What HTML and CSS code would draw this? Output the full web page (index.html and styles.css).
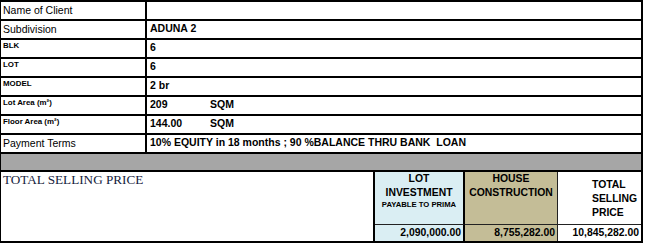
FILE: index.html
```html
<!DOCTYPE html>
<html>
<head>
<meta charset="utf-8">
<link rel="stylesheet" href="styles.css">
</head>
<body>
<div class="sheet">
  <div class="row"><div class="lbl">Name of Client</div><div class="val"></div></div>
  <div class="row"><div class="lbl">Subdivision</div><div class="val">ADUNA 2</div></div>
  <div class="row"><div class="lbl small">BLK</div><div class="val">6</div></div>
  <div class="row"><div class="lbl small">LOT</div><div class="val">6</div></div>
  <div class="row"><div class="lbl small">MODEL</div><div class="val">2 br</div></div>
  <div class="row"><div class="lbl small">Lot Area (m²)</div><div class="val"><span class="num">209</span><span>SQM</span></div></div>
  <div class="row"><div class="lbl small">Floor Area (m²)</div><div class="val"><span class="num">144.00</span><span>SQM</span></div></div>
  <div class="row"><div class="lbl">Payment Terms</div><div class="val pre">10% EQUITY in 18 months ; 90 %BALANCE THRU BANK  LOAN</div></div>
  <div class="band"></div>
  <div class="bottom">
    <div class="tsp">TOTAL SELLING PRICE</div>
    <div class="hd lot"><div>LOT</div><div>INVESTMENT</div><div class="sub">PAYABLE TO PRIMA</div></div>
    <div class="hd house"><div>HOUSE</div><div>CONSTRUCTION</div></div>
    <div class="hd total"><div>TOTAL</div><div>SELLING</div><div>PRICE</div></div>
    <div class="amt lot">2,090,000.00</div>
    <div class="amt house">8,755,282.00</div>
    <div class="amt total">10,845,282.00</div>
  </div>
</div>
</body>
</html>
```

FILE: styles.css
```css
html, body {
  margin: 0;
  padding: 0;
  background: #ffffff;
}

.sheet {
  width: 643px;
  box-sizing: border-box;
  border-top: 2px solid #000;
  border-left: 1px solid #000;
  border-right: 2px solid #000;
  font-family: "Liberation Sans", Arial, sans-serif;
  color: #000;
}

.row {
  display: grid;
  grid-template-columns: 146px 1fr;
  height: 19px;
  box-sizing: border-box;
  border-bottom: 2px solid #000;
}

.lbl {
  border-right: 2px solid #000;
  padding-left: 2px;
  font-size: 10.5px;
  line-height: 16px;
  white-space: nowrap;
}

.lbl.small {
  font-size: 7.9px;
  font-weight: bold;
  line-height: 12px;
}

.val {
  padding-left: 3px;
  font-size: 10.5px;
  font-weight: bold;
  line-height: 15px;
  white-space: nowrap;
  display: flex;
}

.val .num {
  width: 60px;
}

.pre {
  white-space: pre;
}

.band {
  height: 18px;
  box-sizing: border-box;
  background: #a6a6a6;
  border-bottom: 2px solid #000;
}

.bottom {
  display: grid;
  grid-template-columns: 374px 90px 93px 1fr;
  grid-template-rows: 53px 16px;
  border-bottom: 2px solid #000;
}

.tsp {
  grid-row: 1 / span 2;
  border-right: 2px solid #000;
  font-family: "Liberation Serif", "Times New Roman", serif;
  font-size: 13.2px;
  line-height: 16px;
  color: #15223d;
  padding-left: 2px;
}

.hd {
  box-sizing: border-box;
  border-bottom: 1px solid #222;
  font-size: 10.4px;
  font-weight: bold;
  line-height: 14px;
  text-align: center;
}

.lot {
  background: #daeef3;
  border-right: 2px solid #000;
}

.house {
  background: #c4bd97;
  border-right: 1px solid #222;
}

.hd .sub {
  font-size: 7.7px;
  line-height: 10px;
}

.hd.total {
  display: flex;
  flex-direction: column;
  justify-content: center;
  text-align: left;
  padding-left: 34px;
  padding-top: 2px;
}

.amt {
  font-size: 10.4px;
  font-weight: bold;
  line-height: 16px;
  text-align: right;
  padding-right: 2px;
  white-space: nowrap;
}
```
